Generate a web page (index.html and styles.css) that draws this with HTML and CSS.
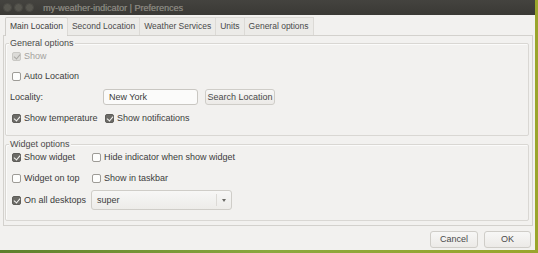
FILE: index.html
```html
<!DOCTYPE html>
<html>
<head>
<meta charset="utf-8">
<link rel="stylesheet" href="styles.css">
</head>
<body>
<div class="window">
  <div class="titlebar">
    <div class="wbtns"><span class="wbtn"></span><span class="wbtn"></span><span class="wbtn"></span></div>
    <span class="title">my-weather-indicator | Preferences</span>
  </div>
  <div class="content">
    <div class="tabs">
      <div class="tab active">Main Location</div>
      <div class="tab">Second Location</div>
      <div class="tab">Weather Services</div>
      <div class="tab">Units</div>
      <div class="tab">General options</div>
    </div>
    <div class="notebook">
      <div class="frame general">
        <div class="frame-label">General options</div>
        <div class="row r1"><span class="cb checked disabled"></span><span class="lbl dim">Show</span></div>
        <div class="row r2"><span class="cb"></span><span class="lbl">Auto Location</span></div>
        <div class="row r3 grid-g">
          <span class="lbl locality">Locality:</span>
          <div class="loc-controls">
            <div class="entry">New York</div>
            <div class="button search">Search Location</div>
          </div>
        </div>
        <div class="row r4 grid-g">
          <div class="check"><span class="cb checked"></span><span class="lbl">Show temperature</span></div>
          <div class="check col2g"><span class="cb checked"></span><span class="lbl">Show notifications</span></div>
        </div>
      </div>
      <div class="frame widget">
        <div class="frame-label">Widget options</div>
        <div class="row w1 grid-w">
          <div class="check"><span class="cb checked"></span><span class="lbl">Show widget</span></div>
          <div class="check col2w"><span class="cb"></span><span class="lbl">Hide indicator when show widget</span></div>
        </div>
        <div class="row w2 grid-w">
          <div class="check"><span class="cb"></span><span class="lbl">Widget on top</span></div>
          <div class="check col2w"><span class="cb"></span><span class="lbl">Show in taskbar</span></div>
        </div>
        <div class="row w3 grid-w">
          <div class="check"><span class="cb checked"></span><span class="lbl">On all desktops</span></div>
          <div class="combo"><span class="combo-text">super</span><span class="combo-sep"></span><span class="combo-arrow"></span></div>
        </div>
      </div>
    </div>
    <div class="actions">
      <div class="button cancel">Cancel</div>
      <div class="button ok">OK</div>
    </div>
  </div>
</div>
</body>
</html>
```
FILE: styles.css
```css
* { box-sizing: border-box; }
html, body { margin: 0; padding: 0; }
body {
  width: 538px;
  height: 253px;
  overflow: hidden;
  background: linear-gradient(90deg, #5d7f2c 0%, #8aa83e 50%, #9aa52c 100%);
  font-family: "Liberation Sans", Arial, sans-serif;
  font-size: 9px;
  color: #3c3c3c;
}
.window {
  width: 535px;
  height: 250px;
  background: #f2f1ef;
  display: flex;
  flex-direction: column;
}
.titlebar {
  height: 15px;
  background: linear-gradient(#44433f, #3a3935);
  display: flex;
  align-items: center;
  padding-left: 3px;
}
.wbtns { display: flex; gap: 2px; }
.wbtn {
  width: 9px; height: 9px; border-radius: 50%;
  background: #57564f;
  border: 1px solid #4a4944;
}
.title {
  margin-left: 9px;
  color: #85837c;
  font-size: 9px;
  text-shadow: 0.3px 0 0 #85837c;
}
.content { flex: 1; display: flex; flex-direction: column; }
.tabs {
  display: flex;
  margin: 2px 0 0 5px;
  height: 19px;
  position: relative;
  z-index: 1;
  font-size: 8.5px;
}
.tab {
  height: 18px;
  line-height: 17px;
  padding: 0 4px;
  border: 1px solid #dcdad6;
  border-bottom: none;
  background: #ecebe8;
  color: #4a4a4a;
  margin-right: -1px;
}
.tab.active {
  height: 19px;
  background: #f2f1ef;
  border-color: #cfcdc9;
  color: #3c3c3c;
  border-radius: 2px 2px 0 0;
}
.notebook {
  margin: -1px 2px 0 3px;
  border: 1px solid #d3d1cd;
  height: 191px;
  padding: 7px 3px 0 1px;
}
.frame {
  border: 1px solid #d9d7d3;
  border-radius: 2px;
  padding: 0 6px;
  box-shadow: inset 1px 1px 0 #fbfbfa;
}
.frame-label {
  margin: -6px 0 0 -3px;
  height: 11px;
  line-height: 11px;
  width: fit-content;
  padding: 0 1px;
  background: #f2f1ef;
  color: #4a4a4a;
}
.general { height: 93px; }
.widget { margin-top: 8px; height: 77px; }
.row { display: flex; align-items: center; height: 18px; }
.r1 { margin-top: -2px; }
.r2 { margin-top: 2px; }
.r3, .r4 { margin-top: 3px; }
.w1 { margin-top: -2px; }
.w2 { margin-top: 3px; }
.w3 { margin-top: 3px; height: 20px; }
.grid-g { display: grid; grid-template-columns: 91px auto; align-items: center; }
.grid-w { display: grid; grid-template-columns: 79px auto; align-items: center; }
.check { display: flex; align-items: center; }
.col2g { margin-left: 2px; }
.col2w { margin-left: 1px; }
.cb {
  width: 9px; height: 9px;
  border: 1px solid #9d9b96;
  border-radius: 2px;
  background: #fdfdfc;
  margin-right: 3px;
  position: relative;
  flex: none;
}
.cb.checked {
  background: #6c6b67;
  border-color: #5e5d59;
}
.cb.checked::after {
  content: "";
  position: absolute;
  left: 2px; top: 0px;
  width: 3px; height: 5px;
  border: solid #f5f5f3;
  border-width: 0 1.5px 1.5px 0;
  transform: rotate(40deg);
}
.cb.disabled {
  background: #dcdbd8;
  border-color: #c9c8c4;
}
.cb.disabled::after { border-color: #a9a8a4; }
.lbl.dim { color: #a3a29e; }
.locality { margin-left: -2px; }
.loc-controls { display: flex; align-items: center; gap: 7px; }
.entry {
  width: 95px; height: 16px;
  border: 1px solid #c9c7c2;
  border-radius: 3px;
  background: #fbfbfa;
  padding-left: 5px;
  line-height: 14px;
  color: #3c3c3c;
}
.button {
  height: 16px;
  border: 1px solid #cfcdc8;
  border-radius: 3px;
  background: linear-gradient(#f7f7f6, #eceae7);
  line-height: 14px;
  text-align: center;
  color: #4a4a4a;
}
.search { width: 70px; }
.combo {
  width: 141px; height: 20px;
  border: 1px solid #cfcdc8;
  border-radius: 3px;
  background: linear-gradient(#f7f7f6, #edece9);
  display: flex;
  align-items: center;
  padding-left: 5px;
}
.combo-text { flex: 1; }
.combo-sep { width: 1px; height: 12px; background: #dcdad6; margin-right: 5px; }
.combo-arrow {
  width: 0; height: 0;
  border-left: 2.5px solid transparent;
  border-right: 2.5px solid transparent;
  border-top: 3px solid #6a6965;
  margin-right: 5px;
}
.actions {
  display: flex;
  justify-content: flex-end;
  gap: 6px;
  padding: 5px 4px 0 0;
}
.actions .button { height: 17px; line-height: 15px; }
.cancel { width: 48px; }
.ok { width: 47px; }
```
